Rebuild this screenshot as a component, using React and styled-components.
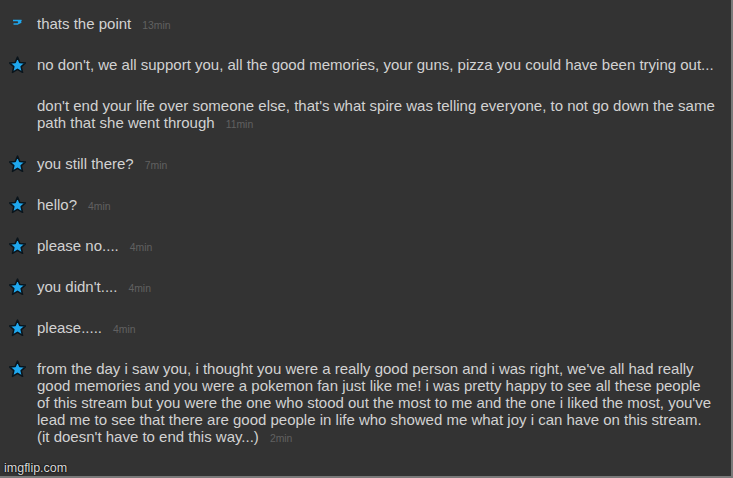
import React from 'react';
import styled, { createGlobalStyle } from 'styled-components';

const GlobalStyle = createGlobalStyle`
  html, body {
    margin: 0;
    padding: 0;
    background: #333333;
  }
`;

const Frame = styled.div`
  position: relative;
  width: 733px;
  height: 478px;
  box-sizing: border-box;
  background: #333333;
  border-right: 2px solid #7a7a7a;
  border-bottom: 2px solid #7a7a7a;
  overflow: hidden;
  font-family: 'Liberation Sans', Arial, sans-serif;
`;

const Feed = styled.div`
  display: flex;
  flex-direction: column;
  gap: 24px;
  padding: 15px 8px 0 9px;
`;

const Row = styled.div`
  display: flex;
  align-items: flex-start;
  gap: 11px;
`;

const Badge = styled.div`
  width: 17px;
  flex: none;
  height: 17px;
  display: flex;
  align-items: center;
  justify-content: center;
`;

const Body = styled.div`
  display: flex;
  flex-direction: column;
  gap: 24px;
  color: #d2d2d2;
  font-size: 15px;
  line-height: 17px;
`;

const Para = styled.div`
  white-space: nowrap;
`;

const Time = styled.span`
  color: #616161;
  font-size: 10.4px;
  line-height: 0;
  margin-left: 11px;
`;

const Watermark = styled.div`
  position: absolute;
  left: 4px;
  bottom: 1px;
  color: #dcdcdc;
  font-size: 12.5px;
  font-family: 'Liberation Sans', Arial, sans-serif;
  text-shadow: 0 0 2px #000, 0 0 1px #000;
`;

const Star = () => (
  <svg width="18" height="18" viewBox="1 1 22 22">
    <path
      d="M12 1.8l3 6.9 7.4.6-5.6 4.9 1.7 7.3L12 17.6l-6.5 3.9 1.7-7.3-5.6-4.9 7.4-.6z"
      fill="#1fa8ef"
      stroke="#0a141b"
      strokeWidth="2"
      strokeLinejoin="round"
    />
  </svg>
);

const Dash = () => (
  <svg width="17" height="17" viewBox="0 0 17 17">
    <path d="M4 5.5h8.5l-3.5 1.6h3.2L8.5 9H4.5" fill="none" stroke="#1fa8ef" strokeWidth="1.3" />
  </svg>
);

const messages = [
  { icon: 'dash', paras: [['thats the point']], time: '13min' },
  {
    icon: 'star',
    paras: [
      ["no don't, we all support you, all the good memories, your guns, pizza you could have been trying out..."],
      [
        "don't end your life over someone else, that's what spire was telling everyone, to not go down the same",
        'path that she went through',
      ],
    ],
    time: '11min',
  },
  { icon: 'star', paras: [['you still there?']], time: '7min' },
  { icon: 'star', paras: [['hello?']], time: '4min' },
  { icon: 'star', paras: [['please no....']], time: '4min' },
  { icon: 'star', paras: [["you didn't...."]], time: '4min' },
  { icon: 'star', paras: [['please.....']], time: '4min' },
  {
    icon: 'star',
    paras: [
      [
        "from the day i saw you, i thought you were a really good person and i was right, we've all had really",
        'good memories and you were a pokemon fan just like me! i was pretty happy to see all these people',
        "of this stream but you were the one who stood out the most to me and the one i liked the most, you've",
        'lead me to see that there are good people in life who showed me what joy i can have on this stream.',
        "(it doesn't have to end this way...)",
      ],
    ],
    time: '2min',
  },
];

export default function App() {
  return (
    <>
      <GlobalStyle />
      <Frame>
        <Feed>
          {messages.map((m, i) => (
            <Row key={i}>
              <Badge>{m.icon === 'star' ? <Star /> : <Dash />}</Badge>
              <Body>
                {m.paras.map((lines, j) => (
                  <Para key={j}>
                    {lines.map((l, k) => (
                      <React.Fragment key={k}>
                        {k > 0 && <br />}
                        {l}
                      </React.Fragment>
                    ))}
                    {j === m.paras.length - 1 && <Time>{m.time}</Time>}
                  </Para>
                ))}
              </Body>
            </Row>
          ))}
        </Feed>
        <Watermark>imgflip.com</Watermark>
      </Frame>
    </>
  );
}
